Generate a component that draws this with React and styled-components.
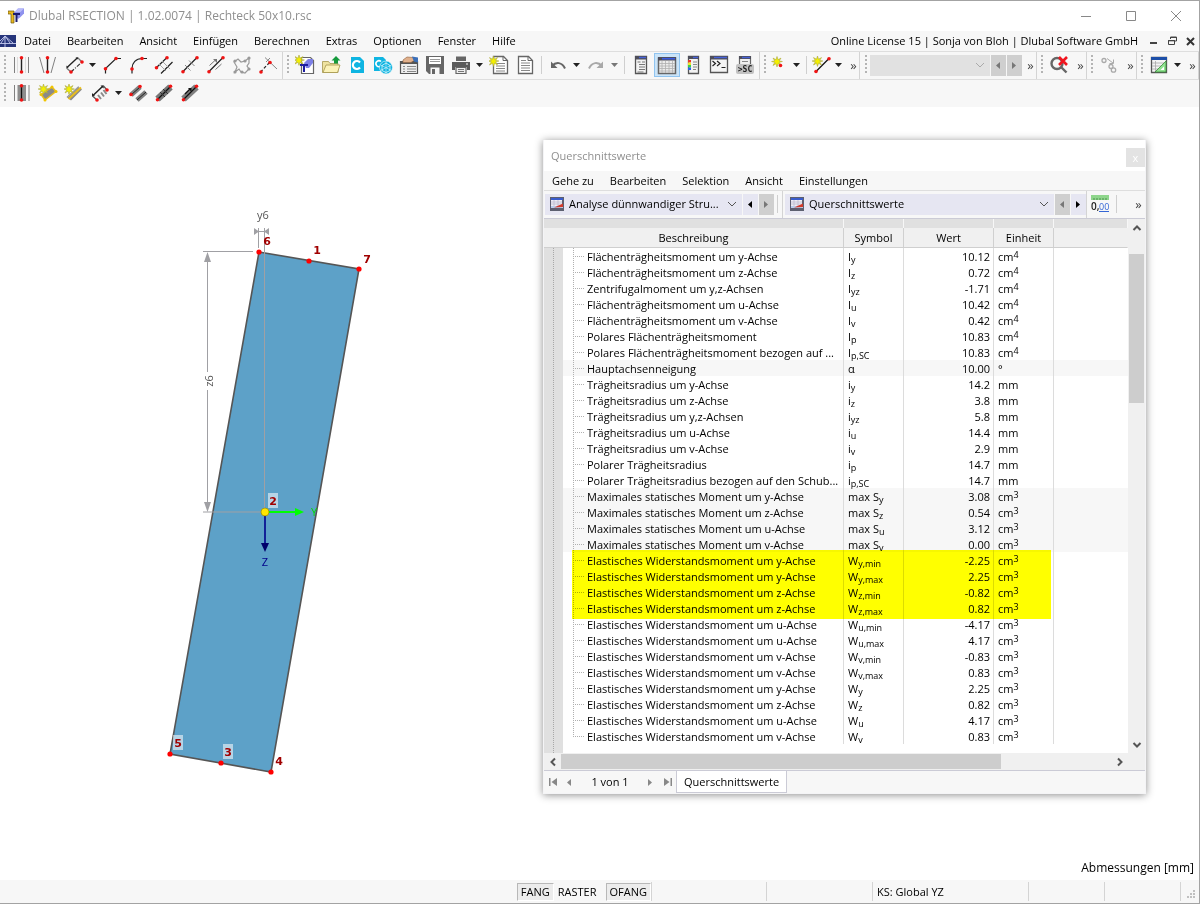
import React from 'react'
import styled, { createGlobalStyle, css } from 'styled-components'

const GlobalStyle = createGlobalStyle`
  * {
    box-sizing: border-box;
  }
  body {
    margin: 0;
    background: #fff;
  }
  button, select {
    font: inherit;
    color: inherit;
    border: 0;
    margin: 0;
    padding: 0;
    background: transparent;
    border-radius: 0;
  }
`

/* ---------- icons (20 x 20) ---------- */

const Dot = ({ x, y }) => <circle cx={x} cy={y} r="1.8" fill="#f01414" />

const Star = ({ x = 5, y = 5 }) => (
  <g transform={`translate(${x} ${y})`}>
    <path d="M0-5L1-1.8 4-3.4 2.2-.6 5.4 0 2.2.8 4 4 1 2.2 0 5.4-1 2.2-4 4-2.2.8-5.4 0-2.2-.6-4-3.4-1-1.8z" fill="#f4f000" stroke="#a9a640" strokeWidth=".6" />
  </g>
)

const ICONS = {
  line: (
    <>
      <path d="M2.5 2v16M16.5 2v16" stroke="#808080" />
      <path d="M5.5 2v16M13.5 2v16" stroke="#dcdcdc" />
      <path d="M9.5 3v14" stroke="#222" strokeWidth="1.4" />
      <Dot x={9.5} y={2.8} /><Dot x={9.5} y={17} />
    </>
  ),
  lineV: (
    <>
      <path d="M1.5 2L6 18M17.5 2L13 18" stroke="#808080" />
      <path d="M9.5 3v14" stroke="#222" strokeWidth="1.4" />
      <Dot x={9.5} y={2.8} /><Dot x={9.5} y={17} />
    </>
  ),
  rect: (
    <>
      <path d="M7 17l-4.5-4M13.5 2.5L18 7" stroke="#777" strokeWidth="1.3" />
      <path d="M3 12.5L13.5 2.8" stroke="#222" strokeWidth="1.4" />
      <path d="M2.5 13v-2.500l2 2zM14 2.500h-2.500l2 2z" fill="#222" />
      <path d="M7 17L18 7" stroke="#333" strokeWidth="1.2" strokeDasharray="4 1.5 1 1.5" />
      <Dot x={7} y={17} /><Dot x={18} y={7} />
    </>
  ),
  polyline: (
    <>
      <path d="M3.5 18.5v-5L14 3.5h5" stroke="#222" strokeWidth="1.2" />
      <Dot x={3.5} y={13.7} /><Dot x={14} y={3.5} />
    </>
  ),
  arc: (
    <>
      <path d="M4 18.5v-5C4 8 8 3.5 14 3.5h5" stroke="#222" strokeWidth="1.2" />
      <Dot x={4} y={14} /><Dot x={14} y={3.5} />
    </>
  ),
  parallel: (
    <>
      <path d="M2.5 12.5L13 2.5M7 18.5L18.5 7" stroke="#222" strokeWidth="1.2" />
      <path d="M8 6l8 8M5 9l7 7" stroke="#aaa" />
      <Dot x={2.5} y={12.7} /><Dot x={13} y={2.7} />
    </>
  ),
  divide: (
    <>
      <path d="M2.5 17L17 2.5" stroke="#222" strokeWidth="1.2" />
      <path d="M5 10l5.5 5.5M9 5.5l5.5 5.5" stroke="#888" />
      <Dot x={3} y={16.8} /><Dot x={17} y={2.8} />
    </>
  ),
  extend: (
    <>
      <path d="M2.5 17L17 2.5" stroke="#222" strokeWidth="1.2" />
      <path d="M3.5 10.5L10 4.5M9.5 14.5l6-5.5" stroke="#777" />
      <path d="M11 4v4L7 4z" fill="#777" />
      <Dot x={3} y={16.8} /><Dot x={17} y={2.8} />
    </>
  ),
  contour: (
    <>
      <path d="M3 17l2-5-3-5 4-3 3 3 4-1 4-3v5l-2 3 2 3-4 4-4-1-2-3z" stroke="#999" strokeWidth="1.2" />
      {[[3, 17], [3, 6], [17, 3], [17, 14], [10, 17], [13, 6]].map(([x, y]) => (
        <circle key={`${x}-${y}`} cx={x} cy={y} r="1.6" fill="#999" />
      ))}
    </>
  ),
  normal: (
    <>
      <path d="M2.5 17l9-9.5" stroke="#222" strokeWidth="1.2" strokeDasharray="3 2" />
      <path d="M7 2.5l12 11.5M8 7l4-4" stroke="#888" />
      <Dot x={3} y={17} /><Dot x={12} y={7.5} />
    </>
  ),
  newModel: (
    <>
      <path d="M6.5 2.5h9l3 3v13h-12z" fill="#fff" stroke="#666" strokeWidth="1.2" />
      <path d="M9 8l4-4h5v4l-4 5h-3z" fill="#7d80e6" />
      <path d="M5 9h8v2H10V17H8v-6H5z" fill="#1d1da0" />
      <Star x={4} y={5} />
    </>
  ),
  open: (
    <>
      <path d="M1.5 17.5v-11h6l1.5 2h8v9z" fill="#efe3a0" stroke="#a4964c" strokeWidth=".8" />
      <path d="M2 17.5L5 10h14l-2.5 7.5z" fill="#fbf2b8" stroke="#a4964c" strokeWidth=".8" />
      <path d="M13 8.5V5.5h-2.5L15 1l4.5 4.5H17v3z" fill="#159a3c" />
    </>
  ),
  center: (
    <>
      <path d="M4 2h9l4 4v12H4z" fill="#0fb5e2" />
      <path d="M13 7.5a4 4 0 1 0 0 5" stroke="#fff" strokeWidth="2.2" />
    </>
  ),
  webGlobe: (
    <>
      <path d="M1 2h9l3 3v11H1z" fill="#0fb5e2" />
      <path d="M8 6.5a3 3 0 1 0-1 5" stroke="#fff" strokeWidth="1.6" />
      <circle cx="13" cy="12.5" r="6.5" fill="#0fb5e2" stroke="#f7f7f7" strokeWidth=".6" />
      <path d="M13 6.5v12M7.5 10l11 5.5M18.5 10l-11 5.5" stroke="#bfeaf7" strokeWidth=".7" />
      <path d="M9 15.5v-5l4-2.5 4 2.5v5L13 17.5z" stroke="#fff" strokeWidth=".7" />
    </>
  ),
  paramSheet: (
    <>
      <path d="M1.5 6.5h17v12h-17z" fill="#ededed" stroke="#555" strokeWidth="1.2" />
      <path d="M1 6h18v3H1z" fill="#555" />
      <path d="M4 7.5V5l4-3 6 .5 1 3-3 2z" fill="#e0b08c" stroke="#8d5f3d" strokeWidth=".6" />
      <path d="M13 1.5l6 1v5l-4-1z" fill="#3b6fb8" />
      <path d="M4 11.5h2M8 11.5h9M4 14h2M8 14h9M4 16.5h2M8 16.5h9" stroke="#888" />
    </>
  ),
  save: (
    <>
      <path d="M1 1h18v18H4l-3-3z" fill="#666" />
      <path d="M4 2h12v7H4z" fill="#fff" />
      <path d="M5 4.5h10M5 6.5h10" stroke="#999" />
      <path d="M5.5 12.5h9V19h-9z" fill="#f7f7f7" />
      <path d="M7 14h3v5H7z" fill="#666" />
    </>
  ),
  print: (
    <>
      <path d="M5 1.5h10V6H5z" fill="#666" />
      <path d="M1 7h18v8h-3v-3H4v3H1z" fill="#5b5b5b" />
      <path d="M5 12.5h10v6H5z" fill="#eee" stroke="#666" strokeWidth="1.2" />
      <path d="M7 14.5h6M7 16.5h6" stroke="#777" />
      <path d="M15 9h2" stroke="#fff" />
    </>
  ),
  newReport: (
    <>
      <path d="M4.5 1.5h10l4 4v13h-14z" fill="#fff" stroke="#666" strokeWidth="1.3" />
      <path d="M14 1.5v4h4" stroke="#666" />
      <path d="M7 8.5h9M7 11h9M7 13.5h9M7 16h9" stroke="#888" />
      <Star x={4.5} y={6} />
    </>
  ),
  report: (
    <>
      <path d="M3.5 1.5h10l4 4v13h-14z" fill="#fff" stroke="#666" strokeWidth="1.3" />
      <path d="M13 1.5v4h4" stroke="#666" />
      <path d="M6 5.5h5M6 8h9M6 10.5h9M6 13h9M6 15.5h9" stroke="#888" />
    </>
  ),
  undo: (
    <>
      <path d="M4 11c4-4.5 10-4 13 2.5" stroke="#666" strokeWidth="2" />
      <path d="M3 6.5V13h6.5z" fill="#666" />
    </>
  ),
  redo: (
    <>
      <path d="M16 11C12 6.5 6 7 3 13.5" stroke="#a9a9a9" strokeWidth="2" />
      <path d="M17 6.5V13h-6.5z" fill="#a9a9a9" />
    </>
  ),
  navigator: (
    <>
      <path d="M4.5 1.5h11v17h-11z" fill="#f2f2f2" stroke="#555" strokeWidth="1.3" />
      <path d="M4 1h12v3.5H4z" fill="#4e4e5a" />
      <path d="M8 2.5h7" stroke="#4562d8" strokeWidth="1.4" />
      <path d="M6.5 7h3M11 7h3M8 9.5h6M8 12h6M8 14.5h6M6.5 17h6" stroke="#777" />
    </>
  ),
  tables: (
    <>
      <path d="M1.5 3h17v15.5h-17z" fill="#ececec" stroke="#666" strokeWidth="1.5" />
      <path d="M1 2h18v3.5H1z" fill="#4e4e5a" />
      <path d="M5 3.7h13" stroke="#3a5be0" strokeWidth="1.6" />
      <path d="M2 8.5h16M2 11h16M2 13.5h16M2 16h16M5 6v12M8.5 6v12M12 6v12M15.5 6v12" stroke="#b0b0b0" strokeWidth=".8" />
    </>
  ),
  panel: (
    <>
      <path d="M5.5 1.5h10v17h-10z" fill="#f2f2f2" stroke="#555" strokeWidth="1.3" />
      <path d="M5 1h11v3H5z" fill="#4e4e5a" />
      <path d="M10 2.5h5" stroke="#4562d8" strokeWidth="1.4" />
      <path d="M5 5h3v2.5H5z" fill="#e8382b" />
      <path d="M5 7.5h3V10H5z" fill="#f0e02c" />
      <path d="M5 10h3v2.5H5z" fill="#38cf4c" />
      <path d="M5 12.5h3V15H5z" fill="#2b63e8" />
      <path d="M10 7h4M10 9.5h4M10 12h4M10 14.5h3" stroke="#888" />
    </>
  ),
  console: (
    <>
      <path d="M1.5 1.5h17v16h-17z" fill="#f4f4f4" stroke="#555" strokeWidth="1.3" />
      <path d="M1 1h18v3.5H1z" fill="#4e4e5a" />
      <path d="M5 2.5h13" stroke="#4562d8" strokeWidth="1.4" />
      <path d="M3.5 6l3 2.5-3 2.5M8 6l3 2.5L8 11M12.5 12.5h4" stroke="#222" strokeWidth="1.2" />
    </>
  ),
  script: (
    <>
      <path d="M4.5 1.5h11v10h-11z" fill="#f0f0f0" stroke="#666" strokeWidth="1.2" />
      <path d="M4 1h12v3H4z" fill="#4e4e5a" />
      <path d="M7 2.5h8" stroke="#4562d8" strokeWidth="1.4" />
      <path d="M7 6.5h6" stroke="#888" />
      <rect x="1" y="9" width="18" height="10" rx="2" fill="#c2c2c2" />
      <text x="10" y="17" textAnchor="middle" fontFamily="DejaVu Sans Mono, monospace" fontWeight="700" fontSize="8" fill="#222">&gt;SC</text>
    </>
  ),
  newNode: (
    <>
      <Star x={7} y={6.5} />
      <Dot x={10.5} y={10.5} />
    </>
  ),
  newLine: (
    <>
      <path d="M4 16.5L17 3.5" stroke="#111" strokeWidth="1.3" />
      <Star x={5.5} y={6} />
      <Dot x={4} y={16.5} /><Dot x={17} y={3.7} />
    </>
  ),
  noSearch: (
    <>
      <path d="M12.5 12.5l5 5" stroke="#666" strokeWidth="2.4" />
      <circle cx="8" cy="8.5" r="5.5" fill="none" stroke="#666" strokeWidth="2.4" />
      <path d="M10 2l8 8M18 2l-8 8" stroke="#f0141e" strokeWidth="2.6" />
    </>
  ),
  linkNodes: (
    <>
      <circle cx="5" cy="5.5" r="2" stroke="#aaa" strokeWidth="1.3" />
      <circle cx="12" cy="11.5" r="2" stroke="#aaa" strokeWidth="1.3" />
      <circle cx="14.5" cy="15" r="2.2" stroke="#aaa" strokeWidth="1.3" />
      <path d="M8 3.5l6 4.5M14.5 4.5V8.5H10.5" stroke="#aaa" />
    </>
  ),
  designTable: (
    <>
      <path d="M2.5 2.5h15v15h-15z" fill="#f4f4f4" stroke="#555" strokeWidth="1.3" />
      <path d="M2 2h16v3H2z" fill="#1d4fa8" />
      <path d="M3 8h14M3 11h14M3 14h14M6.5 6v11" stroke="#a8a8a8" strokeWidth=".8" />
      <path d="M6 17L17 6v11z" fill="#8fe28f" stroke="#3a8a3a" strokeWidth=".8" />
      <path d="M11.5 15l3.5-3.5V15z" fill="#fff" />
    </>
  ),
  element: (
    <>
      <path d="M2.5 2v16M17 2v16" stroke="#808080" />
      <path d="M5.5 2H14v16H5.5z" fill="#8d8d8d" />
      <path d="M9.5 3v14" stroke="#111" strokeWidth="1.3" />
      <Dot x={9.5} y={2.8} /><Dot x={9.5} y={17} />
    </>
  ),
  newOpening: (
    <>
      <path d="M3 11.5L14 4l4 4.5L7 17z" fill="#8a8a8a" stroke="#e8be1e" strokeWidth="1.5" />
      {[[3, 11.5], [14, 4], [18, 8.5], [7, 17]].map(([x, y]) => (
        <circle key={x} cx={x} cy={y} r="1.5" fill="#f0c400" />
      ))}
      <Star x={5.5} y={6} />
    </>
  ),
  newElement: (
    <>
      <path d="M2.5 14L14 3.5l4 3L7 17.5z" fill="#8a8a8a" />
      <path d="M3 15L15 3.5" stroke="#aaa" strokeWidth="1" />
      <path d="M4.5 16L17 4.5" stroke="#e8be1e" strokeWidth="2" />
      <Star x={5} y={6} />
    </>
  ),
  elementRect: (
    <>
      <path d="M3 12.5L13 3" stroke="#222" strokeWidth="1.5" />
      <path d="M2 13.500v-3.500l3 3zM14 2.500h-3.500l3 3z" fill="#222" />
      <path d="M2.5 13L7 17M13.5 3L17 7" stroke="#555" strokeWidth="1.2" />
      <path d="M8 12l3 4M11 9.5l3 4M13.5 7l3 4" stroke="#8a8a8a" strokeWidth="2" />
      <Dot x={7} y={17} /><Dot x={17} y={7} />
    </>
  ),
  elementParallel: (
    <>
      <path d="M3 12L12 4M9 17l9-8" stroke="#808080" strokeWidth="5" />
      <path d="M3 12L12 4M9 17l9-8" stroke="#222" />
      <Dot x={3} y={11.5} /><Dot x={12} y={3.5} />
    </>
  ),
  elementDivide: (
    <>
      <path d="M3.5 16L16.5 4" stroke="#777" strokeWidth="6.5" />
      <path d="M3 17L17 3" stroke="#111" strokeWidth="1.3" />
      <path d="M6 9l5 5M9 6l5 5" stroke="#333" />
      <Dot x={3.5} y={16.7} /><Dot x={16.5} y={3.3} />
    </>
  ),
  elementExtend: (
    <>
      <path d="M3.5 16L16.5 4" stroke="#808080" strokeWidth="6.5" />
      <path d="M3 17L17 3M5 11l5-5" stroke="#111" strokeWidth="1.3" />
      <path d="M11.5 5v4L8 5z" fill="#111" />
      <Dot x={3.5} y={16.7} /><Dot x={16.5} y={3.3} />
    </>
  ),
}

const Icon = ({ name }) => (
  <svg width="20" height="20" viewBox="0 0 20 20" fill="none" aria-hidden="true">{ICONS[name]}</svg>
)

const Logo = () => (
  <svg width="16" height="16" viewBox="0 0 16 16" aria-hidden="true">
    <path d="M6 5l4-4.5h6v5L12 9.5 10 11z" fill="#8f92ee" />
    <path d="M10 .5h6L12.5 4H6.5z" fill="#b9bbfa" />
    <path d="M0 3h6v12H3V6H0z" fill="#e9b91e" stroke="#6b5410" strokeWidth=".7" />
    <path d="M5 5h7v2H9.5v7h-2V7H5z" fill="#1c1c6e" />
  </svg>
)

const BridgeMark = () => (
  <svg width="16" height="12" viewBox="0 0 16 12" aria-hidden="true">
    <path d="M0 0h16v12H0z" fill="#26347a" />
    <path d="M0 8.5h16M5 1v11M0 6l5-5 5 7M5 1l8 7M1 8l4-6" stroke="#c4cbee" strokeWidth=".9" fill="none" />
  </svg>
)

const SheetMark = () => (
  <svg width="14" height="14" viewBox="0 0 14 14" aria-hidden="true">
    <path d="M0 0h14v14H0z" fill="#5d6070" />
    <path d="M1 1h12v2H1z" fill="#3a5ccc" />
    <path d="M1 3h11v6H1z" fill="#eeeef4" />
    <path d="M1 5h11M1 7h11M4 3v6M8 3v6" stroke="#b4b6c8" strokeWidth=".7" />
    <path d="M1 9h12v2H1z" fill="#b9cdea" />
    <path d="M4 10.5l9-4v3.5z" fill="#d23a2a" />
  </svg>
)

const DecimalsMark = () => (
  <svg width="18" height="18" viewBox="0 0 18 18" aria-hidden="true">
    <path d="M0 0h18v5H0z" fill="#8fd68c" />
    <path d="M3 3v2M6 3v2M9 3v2M12 3v2M15 3v2" stroke="#4b8f4b" />
    <text x="0" y="15" fontFamily="Open Sans, sans-serif" fontSize="10" fontWeight="600" fill="#222">0,</text>
    <text x="8" y="15" fontFamily="Open Sans, sans-serif" fontSize="9" fill="#3566d6">00</text>
    <path d="M8 16.5h10" stroke="#3566d6" />
  </svg>
)

const Caret = ({ dir = 'down', muted, color }) => {
  const shapes = { down: 'M0 1h7L3.5 5z', left: 'M5 0v7L1 3.5z', right: 'M1 0v7l4-3.5z' }
  return (
    <svg width="7" height="7" viewBox="0 0 7 7" aria-hidden="true">
      <path d={shapes[dir]} fill={color || (muted ? '#777' : '#222')} />
    </svg>
  )
}

const Chevron = ({ dir = 'down', color = '#555', bold }) => {
  const turn = { down: 0, left: 90, up: 180, right: 270 }[dir]
  return (
    <svg width="10" height="10" viewBox="0 0 10 10" fill="none" aria-hidden="true">
      <path d={bold ? 'M1.5 3L5 6.5 8.5 3' : 'M1 3l4 4 4-4'} transform={`rotate(${turn} 5 5)`} stroke={color} strokeWidth={bold ? 2 : 1} />
    </svg>
  )
}

/* ---------- shell ---------- */

const Shell = styled.div`
  display: flex;
  flex-direction: column;
  min-height: 100vh;
  border: 1px solid #a3a3a3;
  border-left: 0;
  font-family: "Open Sans", "Noto Sans", sans-serif;
  font-size: 11px;
  line-height: 16px;
  color: #000;
`

const TitleBar = styled.header`
  display: flex;
  align-items: center;
  height: 30px;
  padding: 0 1px 0 8px;
  color: #8f8f8f;
  background: #fff;
`

const TitleText = styled.h1`
  flex: 1;
  margin: 0 0 0 5px;
  font-size: 12px;
  font-weight: 400;
`

const CaptionButton = styled.button`
  display: flex;
  align-items: center;
  justify-content: center;
  width: 45px;
  height: 30px;
`

const MenuBar = styled.nav`
  display: flex;
  align-items: center;
  height: 20px;
  background: #f7f7f7;
`

const MenuItem = styled.button`
  padding: 0 8px;
  white-space: nowrap;
`

const License = styled.span`
  margin-left: auto;
  padding-right: 7px;
  white-space: nowrap;
`

const ChildButton = styled.button`
  display: flex;
  align-items: center;
  justify-content: center;
  width: 18px;
  height: 18px;
`

const Toolbar = styled.div`
  display: flex;
  height: 28px;
  border-top: 1px solid #dedede;
  background: #f7f7f7;
`

const ToolGroup = styled.div`
  display: flex;
  align-items: center;
  flex: ${(p) => (p.$grow ? 1 : 'none')};
  padding: 0 ${(p) => p.$pad || 0}px 1px ${(p) => p.$inset || 0}px;
  border-right: 1px solid ${(p) => (p.$open ? 'transparent' : '#d4d4d4')};
`

const Grip = styled.span`
  width: 9px;
  height: 20px;
  background: repeating-linear-gradient(#b4b4b4 0 2px, transparent 2px 4px) 4px 0 / 2px 20px no-repeat;
`

const ToolButton = styled.button`
  display: flex;
  align-items: center;
  justify-content: center;
  width: ${(p) => p.$w || 26}px;
  height: 24px;
  ${(p) =>
    p.$active &&
    css`
      background: #cbe4f8;
      border: 1px solid #90c4f0;
    `}
`

const DropButton = styled(ToolButton)`
  width: 12px;
  padding-right: 2px;
`

const More = styled(ToolButton)`
  width: 14px;
  padding-left: 3px;
  font-size: 13px;
  color: #444;
`

const MoreEnd = styled(More)`
  margin-left: 10px;
`

const Divider = styled.span`
  width: 1px;
  height: 18px;
  margin: 0 3px;
  background: #cfcfcf;
`

const SelectBox = styled.label`
  display: flex;
  align-items: center;
  flex: ${(p) => (p.$w ? 'none' : 1)};
  width: ${(p) => (p.$w ? `${p.$w}px` : 'auto')};
  min-width: 0;
  height: 21px;
  padding: 0 5px;
  gap: 5px;
  background: ${(p) => (p.$off ? '#e1e1e1' : '#e6e6f2')};
`

const Select = styled.select`
  flex: 1;
  min-width: 0;
  appearance: none;
  outline: 0;
`

const StepButton = styled.button`
  display: flex;
  align-items: center;
  justify-content: center;
  width: 15px;
  height: 21px;
  margin-left: 1px;
  background: ${(p) => (p.$off ? '#cfcfcf' : '#e6e6f2')};
`

const Workspace = styled.main`
  position: relative;
  flex: 1;
  min-height: 773px;
  background: #fff;
`

const Drawing = styled.svg`
  display: block;
  width: 400px;
  height: 700px;
`

const UnitsNote = styled.p`
  position: absolute;
  right: 5px;
  bottom: 4px;
  margin: 0;
  font-size: 12px;
`

const StatusBar = styled.footer`
  display: flex;
  align-items: center;
  justify-content: flex-end;
  height: 23px;
  background: #f7f7f7;
`

const StatusToggle = styled.button`
  height: 18px;
  padding: 0 3px;
  margin-right: ${(p) => (p.$on ? 0 : 5)}px;
  border: 1px solid transparent;
  ${(p) =>
    p.$on &&
    css`
      background: #ececec;
      border-color: #b8b8b8 #fff #fff #b8b8b8;
    `}
`

const StatusCell = styled.div`
  width: ${(p) => p.$w}px;
  height: 19px;
  padding-left: 4px;
  line-height: 19px;
  border-left: 1px solid #d4d4d4;
`

/* ---------- floating table window ---------- */

const Panel = styled.section`
  position: absolute;
  top: 33px;
  right: 53px;
  width: 603px;
  display: flex;
  flex-direction: column;
  background: #f7f7f7;
  border: 1px solid #f4f4f6;
  border-top: 0;
  box-shadow: 0 1px 8px rgba(0, 0, 0, 0.45);
`

const PanelTitle = styled.div`
  display: flex;
  align-items: center;
  height: 31px;
  padding-left: 7px;
  background: #fff;
  color: #8f8f8f;
`

const PanelHeading = styled.h2`
  flex: 1;
  margin: 0;
  font-size: 11px;
  font-weight: 400;
`

const PanelClose = styled.button`
  width: 19px;
  height: 19px;
  margin-top: 4px;
  color: #fff;
  background: #e3e3e3;
`

const PanelMenu = styled(MenuBar)`
  height: 19px;
`

const PanelTools = styled(Toolbar)`
  height: 29px;
  border-bottom: 1px solid #cbcbd6;
`

const GridArea = styled.div`
  display: flex;
  border-bottom: 1px solid #cbcbd6;
`

const GridMain = styled.div`
  position: relative;
  flex: 1;
  min-width: 0;
`

const Table = styled.table`
  width: 100%;
  table-layout: fixed;
  border-collapse: separate;
  border-spacing: 0;
  background: #fff;

  th, td {
    padding: 0;
    white-space: nowrap;
    font-weight: 400;
  }
`

const Col = styled.col`
  width: ${(p) => (p.$w ? `${p.$w}px` : 'auto')};
`

const StripCell = styled.td`
  height: 9px;
  background: #e0e0e0;
  border-right: 1px solid #f7f7f7;
`

const HeadCell = styled.th`
  height: 20px;
  background: #f0f0f0;
  border-right: 1px solid ${(p) => (p.$last ? 'transparent' : '#d0d0d0')};
  border-bottom: 1px solid #cfcfcf;
`

const Row = styled.tr`
  height: 16px;
  line-height: 14px;
  background: ${(p) => (p.$shade ? '#f7f7f7' : '#fff')};

  td {
    height: 16px;
    padding-top: 2px;
    vertical-align: top;
  }
`

const Gutter = styled.td`
  background: repeating-linear-gradient(#a8a8a8 0 1px, transparent 1px 2px) 9px 0 / 1px 100% no-repeat #e0e0e0;
`

const NameCell = styled.td`
  border-right: 1px solid #dcdcdc;
  background:
    repeating-linear-gradient(#b0b0b0 0 1px, transparent 1px 2px) 10px 0 / 1px ${(p) => (p.$end ? '9px' : '100%')} no-repeat,
    repeating-linear-gradient(90deg, #b0b0b0 0 1px, transparent 1px 2px) 10px 8px / 12px 1px no-repeat;
`

const NameText = styled.span`
  padding-left: 24px;
`

const SymbolCell = styled.td`
  border-right: 1px solid #dcdcdc;

  span {
    padding-left: 4px;
  }
  sub {
    font-size: 9px;
    line-height: 0;
    vertical-align: -2px;
  }
`

const ValueCell = styled.td`
  text-align: right;
  border-right: 1px solid #dcdcdc;

  span {
    padding-right: 3px;
  }
`

const UnitCell = styled(SymbolCell)`
  sup {
    font-size: 9px;
    line-height: 0;
    vertical-align: 3px;
  }
`

const TailCell = styled.td`
  height: 9px;
`

const Marker = styled.div`
  position: absolute;
  top: 331px;
  left: 28px;
  width: 479px;
  height: 69px;
  background: #ff0;
  mix-blend-mode: multiply;
  pointer-events: none;
`

const VScroll = styled.div`
  display: flex;
  flex-direction: column;
  width: 17px;
  background: #f0f0f0;
`

const HScroll = styled.div`
  display: flex;
  height: 17px;
  background: #f0f0f0;
`

const ScrollButton = styled.button`
  display: flex;
  align-items: center;
  justify-content: center;
  width: 17px;
  height: 17px;
`

const VThumb = styled.div`
  width: 15px;
  height: 149px;
  margin: 18px 1px auto;
  background: #cdcdcd;
`

const HThumb = styled.div`
  width: 440px;
  height: 15px;
  margin: 1px auto 1px 0;
  background: #cdcdcd;
`

const PageBar = styled.div`
  display: flex;
  align-items: center;
  height: 22px;
`

const PageButton = styled.button`
  display: flex;
  align-items: center;
  justify-content: center;
  width: 17px;
  height: 22px;
`

const PageCount = styled.span`
  width: 64px;
  text-align: center;
`

const PageTab = styled.button`
  height: 22px;
  padding: 0 7px;
  background: #fff;
  border: 1px solid #cbcbd6;
  border-top: 0;
`

/* ---------- data ---------- */

const MENU = ['Datei', 'Bearbeiten', 'Ansicht', 'Einfügen', 'Berechnen', 'Extras', 'Optionen', 'Fenster', 'Hilfe']
const PANEL_MENU = ['Gehe zu', 'Bearbeiten', 'Selektion', 'Ansicht', 'Einstellungen']

// name, symbol, subscript, value, unit, exponent
const ROWS = [
  ['Flächenträgheitsmoment um y-Achse', 'I', 'y', '10.12', 'cm', '4'],
  ['Flächenträgheitsmoment um z-Achse', 'I', 'z', '0.72', 'cm', '4'],
  ['Zentrifugalmoment um y,z-Achsen', 'I', 'yz', '-1.71', 'cm', '4'],
  ['Flächenträgheitsmoment um u-Achse', 'I', 'u', '10.42', 'cm', '4'],
  ['Flächenträgheitsmoment um v-Achse', 'I', 'v', '0.42', 'cm', '4'],
  ['Polares Flächenträgheitsmoment', 'I', 'p', '10.83', 'cm', '4'],
  ['Polares Flächenträgheitsmoment bezogen auf ...', 'I', 'p,SC', '10.83', 'cm', '4'],
  ['Hauptachsenneigung', 'α', '', '10.00', '°', ''],
  ['Trägheitsradius um y-Achse', 'i', 'y', '14.2', 'mm', ''],
  ['Trägheitsradius um z-Achse', 'i', 'z', '3.8', 'mm', ''],
  ['Trägheitsradius um y,z-Achsen', 'i', 'yz', '5.8', 'mm', ''],
  ['Trägheitsradius um u-Achse', 'i', 'u', '14.4', 'mm', ''],
  ['Trägheitsradius um v-Achse', 'i', 'v', '2.9', 'mm', ''],
  ['Polarer Trägheitsradius', 'i', 'p', '14.7', 'mm', ''],
  ['Polarer Trägheitsradius bezogen auf den Schub...', 'i', 'p,SC', '14.7', 'mm', ''],
  ['Maximales statisches Moment um y-Achse', 'max S', 'y', '3.08', 'cm', '3'],
  ['Maximales statisches Moment um z-Achse', 'max S', 'z', '0.54', 'cm', '3'],
  ['Maximales statisches Moment um u-Achse', 'max S', 'u', '3.12', 'cm', '3'],
  ['Maximales statisches Moment um v-Achse', 'max S', 'v', '0.00', 'cm', '3'],
  ['Elastisches Widerstandsmoment um y-Achse', 'W', 'y,min', '-2.25', 'cm', '3'],
  ['Elastisches Widerstandsmoment um y-Achse', 'W', 'y,max', '2.25', 'cm', '3'],
  ['Elastisches Widerstandsmoment um z-Achse', 'W', 'z,min', '-0.82', 'cm', '3'],
  ['Elastisches Widerstandsmoment um z-Achse', 'W', 'z,max', '0.82', 'cm', '3'],
  ['Elastisches Widerstandsmoment um u-Achse', 'W', 'u,min', '-4.17', 'cm', '3'],
  ['Elastisches Widerstandsmoment um u-Achse', 'W', 'u,max', '4.17', 'cm', '3'],
  ['Elastisches Widerstandsmoment um v-Achse', 'W', 'v,min', '-0.83', 'cm', '3'],
  ['Elastisches Widerstandsmoment um v-Achse', 'W', 'v,max', '0.83', 'cm', '3'],
  ['Elastisches Widerstandsmoment um y-Achse', 'W', 'y', '2.25', 'cm', '3'],
  ['Elastisches Widerstandsmoment um z-Achse', 'W', 'z', '0.82', 'cm', '3'],
  ['Elastisches Widerstandsmoment um u-Achse', 'W', 'u', '4.17', 'cm', '3'],
  ['Elastisches Widerstandsmoment um v-Achse', 'W', 'v', '0.83', 'cm', '3'],
]

const isShaded = (symbol) => symbol === 'α' || symbol === 'max S'

/* ---------- parts ---------- */

const Tool = ({ name, w, active }) => (
  <ToolButton aria-label={name} $w={w} $active={active}>
    <Icon name={name} />
  </ToolButton>
)

const Drop = ({ muted }) => (
  <DropButton aria-label="Liste">
    <Caret muted={muted} />
  </DropButton>
)

const NODES = [
  { id: 6, x: 259, y: 145, lx: 267, ly: 134 },
  { id: 1, x: 309, y: 154, lx: 317, ly: 143 },
  { id: 7, x: 359, y: 162, lx: 367, ly: 152 },
  { id: 5, x: 170, y: 647, lx: 178, ly: 636, box: true },
  { id: 3, x: 221, y: 656, lx: 228, ly: 645, box: true },
  { id: 4, x: 271, y: 665, lx: 279, ly: 654 },
]

const NodeLabel = ({ id, x, y, box }) => (
  <g>
    {box && <rect x={x - 5} y={y - 8} width="10" height="15" fill="#fff" fillOpacity=".55" />}
    <text x={x} y={y + 4} textAnchor="middle" fontFamily="DejaVu Sans, sans-serif" fontWeight="700" fontSize="11" fill="#a00000">{id}</text>
  </g>
)

const Section = () => (
  <Drawing viewBox="0 0 400 700" fill="none" role="img" aria-label="Querschnitt">
    <path d="M259 145L359 162 271 665 170 647z" fill="#5da1c8" stroke="#555" strokeWidth="1.6" />
    <path d="M203 144.5h50M203 405h60M207.5 146v119M207.5 283v120M264.5 121v284M258.5 121v20" stroke="#a0a0a4" />
    <path d="M207.5 145l3.5 10h-7zM207.5 405l3.5-10h-7zM254 121v7l5-3.5zM269 121v7l-5-3.5z" fill="#a0a0a4" />
    <path d="M254 124.5h15" stroke="#a0a0a4" />
    <text x="263" y="112" textAnchor="middle" fontSize="11" fill="#555">y6</text>
    <text transform="translate(213 274) rotate(-90)" textAnchor="middle" fontSize="11" fill="#555">z6</text>
    <path d="M265 405h32" stroke="#0f0" strokeWidth="2" />
    <path d="M304 405l-9-4v8z" fill="#0f0" />
    <path d="M265 405v32" stroke="#00008b" strokeWidth="1.6" />
    <path d="M265 445l-4-9h8z" fill="#00006b" />
    <text x="314" y="409" textAnchor="middle" fontSize="11" fill="#00d800">Y</text>
    <text x="265" y="459" textAnchor="middle" fontSize="11" fill="#00008b">Z</text>
    {NODES.map((n) => (
      <g key={n.id}>
        <circle cx={n.x} cy={n.y} r="2.6" fill="#f00" />
        <NodeLabel id={n.id} x={n.lx} y={n.ly} box={n.box} />
      </g>
    ))}
    <NodeLabel id={2} x={273} y={394} box />
    <circle cx="265" cy="405" r="4" fill="#ffe600" stroke="#8f8200" strokeWidth=".6" />
  </Drawing>
)

const ValueTable = () => (
  <Table>
    <colgroup>
      <Col $w={19} />
      <Col $w={281} />
      <Col $w={60} />
      <Col $w={90} />
      <Col $w={60} />
      <Col />
    </colgroup>
    <thead>
      <tr>
        <StripCell colSpan={2} />
        <StripCell />
        <StripCell />
        <StripCell />
        <StripCell />
      </tr>
      <tr>
        <HeadCell scope="col" colSpan={2}>Beschreibung</HeadCell>
        <HeadCell scope="col">Symbol</HeadCell>
        <HeadCell scope="col">Wert</HeadCell>
        <HeadCell scope="col">Einheit</HeadCell>
        <HeadCell $last />
      </tr>
    </thead>
    <tbody>
      {ROWS.map(([name, symbol, sub, value, unit, exp], i) => (
        <Row key={symbol + sub + i} $shade={isShaded(symbol)}>
          <Gutter />
          <NameCell $end={i === ROWS.length - 1}><NameText>{name}</NameText></NameCell>
          <SymbolCell><span>{symbol}{sub && <sub>{sub}</sub>}</span></SymbolCell>
          <ValueCell><span>{value}</span></ValueCell>
          <UnitCell><span>{unit}{exp && <sup>{exp}</sup>}</span></UnitCell>
          <td />
        </Row>
      ))}
      <tr>
        <Gutter />
        <TailCell colSpan={5} />
      </tr>
    </tbody>
  </Table>
)

const ValuesPanel = () => (
  <Panel>
    <PanelTitle>
      <PanelHeading>Querschnittswerte</PanelHeading>
      <PanelClose aria-label="Schließen">x</PanelClose>
    </PanelTitle>
    <PanelMenu>
      {PANEL_MENU.map((m) => <MenuItem key={m}>{m}</MenuItem>)}
    </PanelMenu>
    <PanelTools>
      <ToolGroup $pad={1} $inset={1}>
        <SelectBox $w={197}>
          <SheetMark />
          <Select aria-label="Analyse">
            <option>Analyse dünnwandiger Stru...</option>
          </Select>
          <Chevron />
        </SelectBox>
        <StepButton aria-label="Zurück"><Caret dir="left" color="#000" /></StepButton>
        <StepButton aria-label="Weiter" $off><Caret dir="right" muted /></StepButton>
        <Divider />
      </ToolGroup>
      <ToolGroup $grow $inset={2}>
        <SelectBox>
          <SheetMark />
          <Select aria-label="Tabelle">
            <option>Querschnittswerte</option>
          </Select>
          <Chevron />
        </SelectBox>
        <StepButton aria-label="Zurück" $off><Caret dir="left" muted /></StepButton>
        <StepButton aria-label="Weiter"><Caret dir="right" color="#000" /></StepButton>
      </ToolGroup>
      <ToolGroup $open>
        <ToolButton aria-label="Dezimalstellen"><DecimalsMark /></ToolButton>
        <Divider />
        <MoreEnd aria-label="Mehr">»</MoreEnd>
      </ToolGroup>
    </PanelTools>
    <GridArea>
      <GridMain>
        <ValueTable />
        <Marker />
        <HScroll>
          <ScrollButton aria-label="Nach links"><Chevron dir="left" bold /></ScrollButton>
          <HThumb />
          <ScrollButton aria-label="Nach rechts"><Chevron dir="right" bold /></ScrollButton>
        </HScroll>
      </GridMain>
      <VScroll>
        <ScrollButton aria-label="Nach oben"><Chevron dir="up" bold /></ScrollButton>
        <VThumb />
        <ScrollButton aria-label="Nach unten"><Chevron dir="down" bold /></ScrollButton>
        <ScrollButton as="span" />
      </VScroll>
    </GridArea>
    <PageBar>
      <PageButton aria-label="Erste Seite">
        <svg width="8" height="8" viewBox="0 0 8 8"><path d="M0 0h1.5v8H0zM8 0v8L2.5 4z" fill="#888" /></svg>
      </PageButton>
      <PageButton aria-label="Vorherige Seite"><Caret dir="left" color="#888" /></PageButton>
      <PageCount>1 von 1</PageCount>
      <PageButton aria-label="Nächste Seite"><Caret dir="right" color="#888" /></PageButton>
      <PageButton aria-label="Letzte Seite">
        <svg width="8" height="8" viewBox="0 0 8 8"><path d="M6.5 0H8v8H6.5zM0 0v8l5.5-4z" fill="#888" /></svg>
      </PageButton>
      <PageTab>Querschnittswerte</PageTab>
    </PageBar>
  </Panel>
)

export default function App() {
  return (
    <>
      <GlobalStyle />
      <Shell>
        <TitleBar>
          <Logo />
          <TitleText>Dlubal RSECTION | 1.02.0074 | Rechteck 50x10.rsc</TitleText>
          <CaptionButton aria-label="Minimieren">
            <svg width="10" height="10" viewBox="0 0 10 10"><path d="M0 5.5h10" stroke="#888" /></svg>
          </CaptionButton>
          <CaptionButton aria-label="Maximieren">
            <svg width="10" height="10" viewBox="0 0 10 10"><path d="M.5.5h9v9h-9z" fill="none" stroke="#888" /></svg>
          </CaptionButton>
          <CaptionButton aria-label="Schließen">
            <svg width="10" height="10" viewBox="0 0 10 10"><path d="M0 0l10 10M10 0L0 10" stroke="#888" /></svg>
          </CaptionButton>
        </TitleBar>

        <MenuBar>
          <BridgeMark />
          {MENU.map((m) => <MenuItem key={m}>{m}</MenuItem>)}
          <License>Online License 15 | Sonja von Bloh | Dlubal Software GmbH</License>
          <ChildButton aria-label="Minimieren">
            <svg width="8" height="10" viewBox="0 0 8 10"><path d="M0 7h7" stroke="#444" strokeWidth="2" /></svg>
          </ChildButton>
          <ChildButton aria-label="Wiederherstellen">
            <svg width="9" height="10" viewBox="0 0 9 10" fill="none" stroke="#444"><path d="M2.5 3V1h6v4h-2M.5 4.5h6v4h-6zM2 1.5h7M0 4.8h7" /></svg>
          </ChildButton>
          <ChildButton aria-label="Schließen">
            <svg width="9" height="9" viewBox="0 0 9 9"><path d="M1 1l7 7M8 1L1 8" stroke="#333" strokeWidth="2" /></svg>
          </ChildButton>
        </MenuBar>

        <Toolbar>
          <ToolGroup $pad={1}>
            <Grip />
            <Tool name="line" />
            <Tool name="lineV" />
            <Tool name="rect" />
            <Drop />
            <Tool name="polyline" />
            <Tool name="arc" />
            <Tool name="parallel" />
            <Tool name="divide" />
            <Tool name="extend" />
            <Tool name="contour" />
            <Tool name="normal" />
          </ToolGroup>
          <ToolGroup $pad={1}>
            <Grip />
            <Tool name="newModel" />
            <Tool name="open" />
            <Tool name="center" />
            <Tool name="webGlobe" />
            <Tool name="paramSheet" />
            <Tool name="save" />
            <Tool name="print" />
            <Drop />
            <Tool name="newReport" />
            <Tool name="report" />
            <Divider />
            <Tool name="undo" />
            <Drop />
            <Tool name="redo" />
            <Drop muted />
            <Divider />
            <Tool name="navigator" />
            <Tool name="tables" active />
            <Tool name="panel" />
            <Tool name="console" />
            <Tool name="script" />
          </ToolGroup>
          <ToolGroup>
            <Grip />
            <Tool name="newNode" w={22} />
            <Drop />
            <Divider />
            <Tool name="newLine" w={23} />
            <Drop />
            <More aria-label="Mehr">»</More>
          </ToolGroup>
          <ToolGroup $grow $inset={1}>
            <Grip />
            <SelectBox $off>
              <Select aria-label="Lastfall" disabled />
              <Chevron color="#aaa" />
            </SelectBox>
            <StepButton aria-label="Zurück" $off><Caret dir="left" muted /></StepButton>
            <StepButton aria-label="Weiter" $off><Caret dir="right" muted /></StepButton>
            <More aria-label="Mehr">»</More>
          </ToolGroup>
          <ToolGroup>
            <Grip />
            <Tool name="noSearch" />
            <More aria-label="Mehr">»</More>
          </ToolGroup>
          <ToolGroup>
            <Grip />
            <Tool name="linkNodes" />
            <More aria-label="Mehr">»</More>
          </ToolGroup>
          <ToolGroup>
            <Grip />
            <Tool name="designTable" />
            <Drop />
            <More aria-label="Mehr">»</More>
          </ToolGroup>
        </Toolbar>

        <Toolbar>
          <ToolGroup $open>
            <Grip />
            <Tool name="element" />
            <Tool name="newOpening" />
            <Tool name="newElement" />
            <Tool name="elementRect" />
            <Drop />
            <Tool name="elementParallel" />
            <Tool name="elementDivide" />
            <Tool name="elementExtend" />
          </ToolGroup>
        </Toolbar>

        <Workspace>
          <Section />
          <ValuesPanel />
          <UnitsNote>Abmessungen [mm]</UnitsNote>
        </Workspace>

        <StatusBar>
          <StatusToggle $on>FANG</StatusToggle>
          <StatusToggle>RASTER</StatusToggle>
          <StatusToggle $on>OFANG</StatusToggle>
          <StatusCell $w={115} />
          <StatusCell $w={106} />
          <StatusCell $w={156}>KS: Global YZ</StatusCell>
          <StatusCell $w={76} />
          <StatusCell $w={76} />
          <StatusCell $w={19}>
            <svg width="10" height="17" viewBox="0 0 10 17" aria-hidden="true">
              <path d="M8 8h2v2H8zM5 11h2v2H5zM8 11h2v2H8zM2 14h2v2H2zM5 14h2v2H5zM8 14h2v2H8z" fill="#c0c0c0" />
            </svg>
          </StatusCell>
        </StatusBar>
      </Shell>
    </>
  )
}
